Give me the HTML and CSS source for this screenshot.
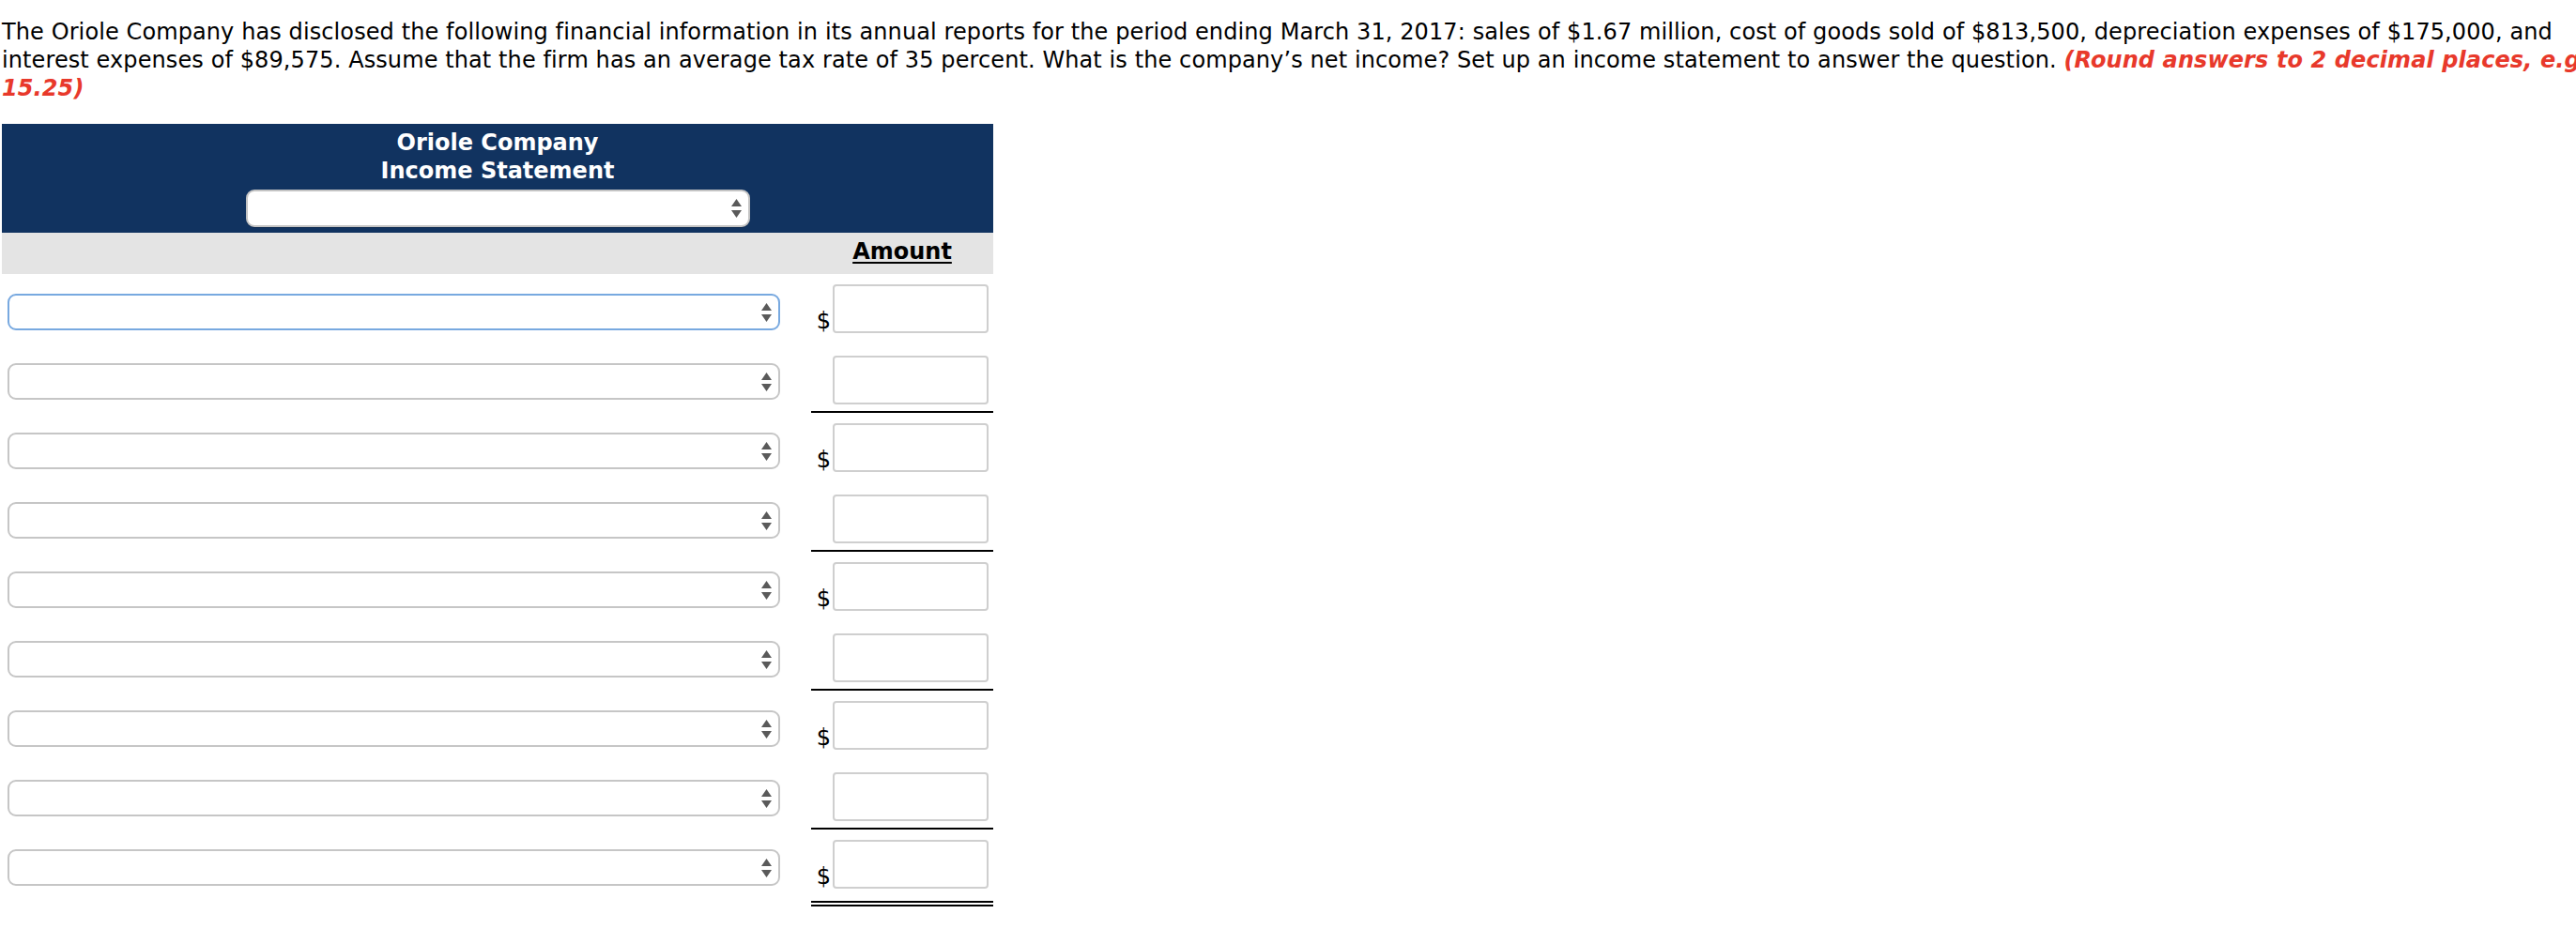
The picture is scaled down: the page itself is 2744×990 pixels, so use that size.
FILE: index.html
```html
<!DOCTYPE html>
<html lang="en">
<head>
<meta charset="utf-8">
<title>Oriole Company Income Statement</title>
<link rel="stylesheet" href="styles.css">
</head>
<body>
<div class="page">
  <p class="question">The Oriole Company has disclosed the following financial information in its annual reports for the period ending March 31, 2017: sales of $1.67 million, cost of goods sold of $813,500, depreciation expenses of $175,000, and<br>interest expenses of $89,575. Assume that the firm has an average tax rate of 35 percent. What is the company’s net income? Set up an income statement to answer the question. <em class="hint">(Round answers to 2 decimal places, e.g.<br>15.25)</em></p>

  <div class="stmt">
    <div class="stmt-head">
      <div class="stmt-title">Oriole Company</div>
      <div class="stmt-title">Income Statement</div>
      <div class="select select-period"><svg class="arrows" viewBox="0 0 11 20" width="11" height="20"><path d="M0 8 L5.5 0 L11 8 Z M0 12 L11 12 L5.5 20 Z"/></svg></div>
    </div>
    <div class="stmt-band"><span class="amount-label">Amount</span></div>

    <div class="line line-dollar">
      <div class="line-label"><div class="select select-focus"><svg class="arrows" viewBox="0 0 11 20" width="11" height="20"><path d="M0 8 L5.5 0 L11 8 Z M0 12 L11 12 L5.5 20 Z"/></svg></div></div>
      <div class="line-amount"><span class="cur">$</span><input class="amt-input" type="text"></div>
    </div>
    <div class="line line-sub">
      <div class="line-label"><div class="select"><svg class="arrows" viewBox="0 0 11 20" width="11" height="20"><path d="M0 8 L5.5 0 L11 8 Z M0 12 L11 12 L5.5 20 Z"/></svg></div></div>
      <div class="line-amount"><input class="amt-input" type="text"></div>
    </div>

    <div class="line line-dollar">
      <div class="line-label"><div class="select"><svg class="arrows" viewBox="0 0 11 20" width="11" height="20"><path d="M0 8 L5.5 0 L11 8 Z M0 12 L11 12 L5.5 20 Z"/></svg></div></div>
      <div class="line-amount"><span class="cur">$</span><input class="amt-input" type="text"></div>
    </div>
    <div class="line line-sub">
      <div class="line-label"><div class="select"><svg class="arrows" viewBox="0 0 11 20" width="11" height="20"><path d="M0 8 L5.5 0 L11 8 Z M0 12 L11 12 L5.5 20 Z"/></svg></div></div>
      <div class="line-amount"><input class="amt-input" type="text"></div>
    </div>

    <div class="line line-dollar">
      <div class="line-label"><div class="select"><svg class="arrows" viewBox="0 0 11 20" width="11" height="20"><path d="M0 8 L5.5 0 L11 8 Z M0 12 L11 12 L5.5 20 Z"/></svg></div></div>
      <div class="line-amount"><span class="cur">$</span><input class="amt-input" type="text"></div>
    </div>
    <div class="line line-sub">
      <div class="line-label"><div class="select"><svg class="arrows" viewBox="0 0 11 20" width="11" height="20"><path d="M0 8 L5.5 0 L11 8 Z M0 12 L11 12 L5.5 20 Z"/></svg></div></div>
      <div class="line-amount"><input class="amt-input" type="text"></div>
    </div>

    <div class="line line-dollar">
      <div class="line-label"><div class="select"><svg class="arrows" viewBox="0 0 11 20" width="11" height="20"><path d="M0 8 L5.5 0 L11 8 Z M0 12 L11 12 L5.5 20 Z"/></svg></div></div>
      <div class="line-amount"><span class="cur">$</span><input class="amt-input" type="text"></div>
    </div>
    <div class="line line-sub">
      <div class="line-label"><div class="select"><svg class="arrows" viewBox="0 0 11 20" width="11" height="20"><path d="M0 8 L5.5 0 L11 8 Z M0 12 L11 12 L5.5 20 Z"/></svg></div></div>
      <div class="line-amount"><input class="amt-input" type="text"></div>
    </div>

    <div class="line line-dollar line-total">
      <div class="line-label"><div class="select"><svg class="arrows" viewBox="0 0 11 20" width="11" height="20"><path d="M0 8 L5.5 0 L11 8 Z M0 12 L11 12 L5.5 20 Z"/></svg></div></div>
      <div class="line-amount"><span class="cur">$</span><input class="amt-input" type="text"></div>
    </div>
  </div>
</div>
</body>
</html>
```

FILE: styles.css
```css
html, body {
  margin: 0;
  padding: 0;
  background: #ffffff;
  overflow: hidden;
}

.page {
  padding: 0 2px;
  font-family: "DejaVu Sans", Verdana, sans-serif;
  font-size: 24px;
  color: #000000;
}

.question {
  margin: 19px 0 23px;
  line-height: 30px;
  white-space: nowrap;
  letter-spacing: 0.1px;
}

.hint {
  color: #e8392b;
  font-weight: bold;
  font-style: italic;
}

.stmt {
  width: 1056px;
}

.stmt-head {
  background: #113360;
  color: #ffffff;
  font-weight: bold;
  text-align: center;
  line-height: 30px;
  padding: 5px 0 6px;
}

.select {
  box-sizing: border-box;
  display: flex;
  align-items: center;
  justify-content: flex-end;
  padding-right: 7px;
  background: #ffffff;
  border: 2px solid #c6c6c6;
  border-radius: 9px;
  height: 39px;
}

.select-period {
  width: 537px;
  height: 40px;
  margin: 5px auto 0;
  border-color: #c4c4c4;
  box-shadow: 0 1px 0 rgba(0, 0, 0, 0.15);
}

.select-focus {
  border-color: #78a9e0;
}

.arrows {
  display: block;
  fill: #5a5a5a;
}

.stmt-band {
  background: #e4e4e4;
  height: 44px;
  box-sizing: border-box;
  display: grid;
  grid-template-columns: 862px 194px;
  padding-top: 5px;
}

.amount-label {
  grid-column: 2;
  text-align: center;
  font-weight: bold;
  line-height: 30px;
  text-decoration: underline;
  text-decoration-thickness: 2px;
  text-underline-offset: 3px;
}

.line {
  display: grid;
  grid-template-columns: 862px 194px;
}

.line-label {
  padding-left: 6px;
  padding-top: 21px;
}

.line-label .select {
  width: 823px;
}

.line-sub .line-label {
  padding-top: 19px;
}

.line-amount {
  display: flex;
  align-items: flex-end;
  justify-content: flex-end;
  padding: 11px 5px 13px 0;
}

.line-sub .line-amount {
  padding-bottom: 7px;
  border-bottom: 2px solid #000000;
}

.line-total .line-amount {
  border-bottom: 6px double #000000;
}

.cur {
  box-sizing: border-box;
  width: 23px;
  padding-right: 2px;
  text-align: right;
  line-height: 24px;
  margin-bottom: 1px;
}

.amt-input {
  box-sizing: border-box;
  width: 166px;
  height: 52px;
  margin: 0;
  padding: 0 6px;
  border: 2px solid #cfcfcf;
  border-radius: 4px;
  background: #ffffff;
  font: inherit;
  outline: none;
}
```
